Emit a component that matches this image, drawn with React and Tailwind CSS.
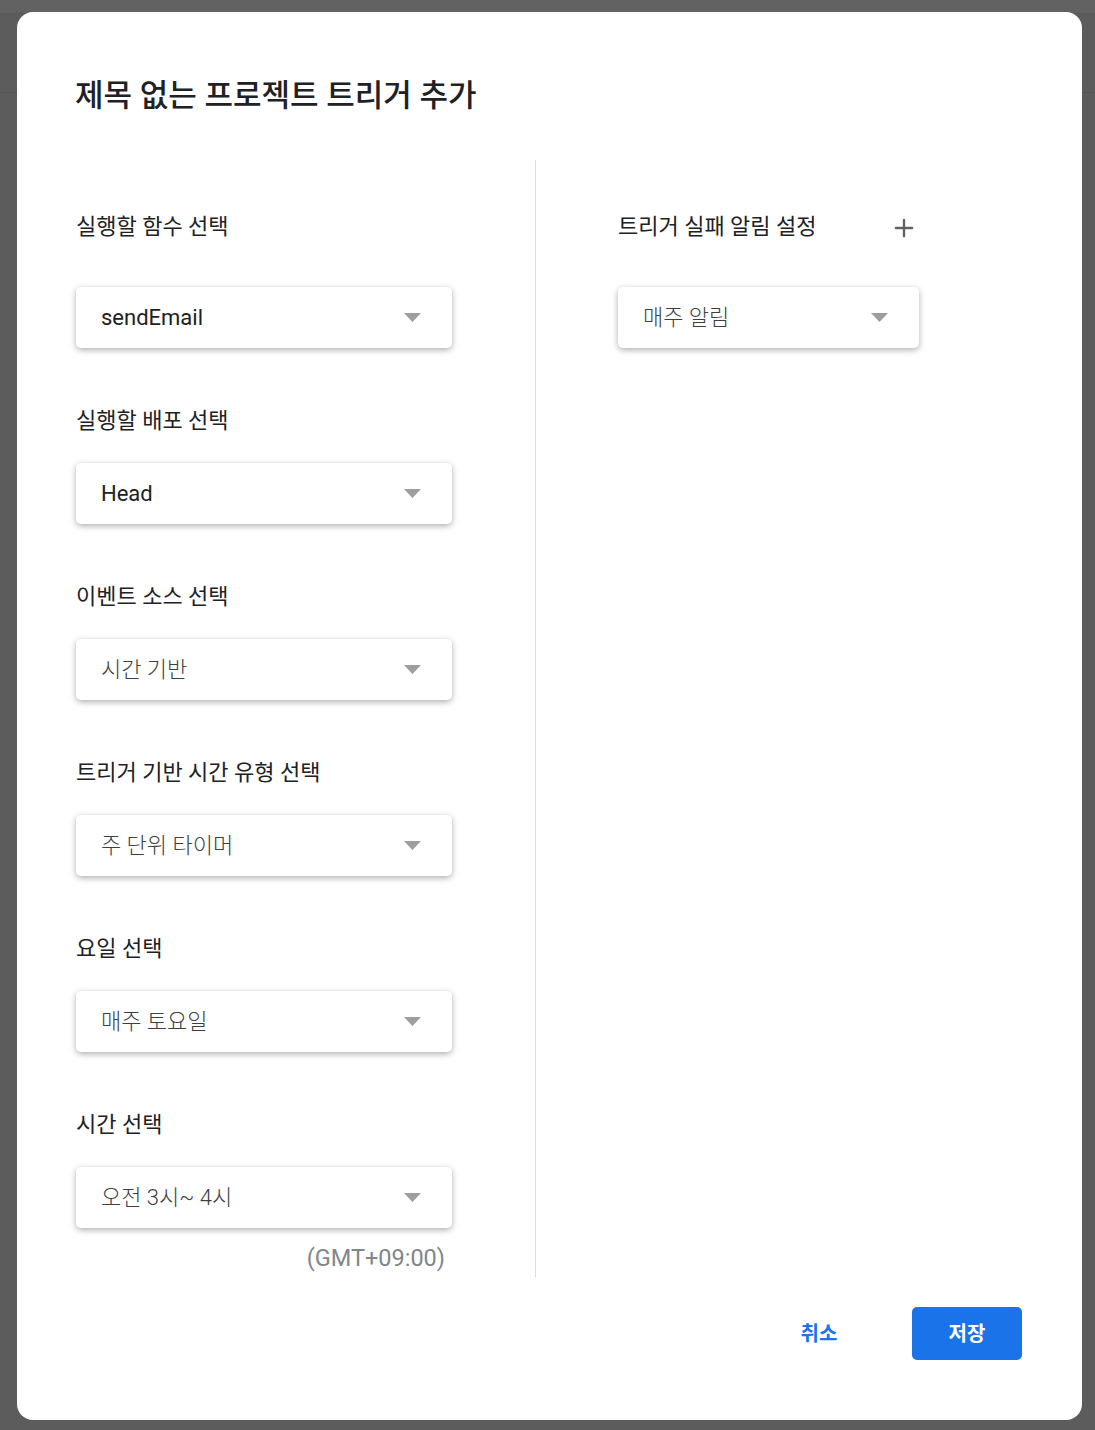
import React from "react";
import { FiPlus } from "react-icons/fi";

const FONT = { fontFamily: "Roboto, 'Noto Sans CJK KR', sans-serif" };

const LEFT_FIELDS = [
  { label: "실행할 함수 선택", value: "sendEmail", latin: true },
  { label: "실행할 배포 선택", value: "Head", latin: true },
  { label: "이벤트 소스 선택", value: "시간 기반" },
  { label: "트리거 기반 시간 유형 선택", value: "주 단위 타이머" },
  { label: "요일 선택", value: "매주 토요일" },
  { label: "시간 선택", value: "오전 3시~ 4시" },
];

const Caret = () => (
  <svg width="17" height="9" viewBox="0 0 17 9" aria-hidden="true">
    <path d="M0 0 L17 0 L8.5 9 Z" fill="#9e9e9e" />
  </svg>
);

const Dropdown = ({ value, latin, width = "w-[376px]" }) => (
  <div
    className={`${width} h-[61px] rounded-[5px] bg-white shadow-[0_2px_6px_rgba(0,0,0,0.32)] flex items-center justify-between pl-[25px] pr-[31px]`}
  >
    <span
      className={`text-[22px] leading-none ${
        latin ? "text-[#202124]" : "text-[#3c4043] font-light"
      }`}
    >
      {value}
    </span>
    <Caret />
  </div>
);

const Field = ({ field, first }) => (
  <div className={first ? "" : "mt-[58px]"}>
    <div
      className={`text-[22px] leading-[30px] text-[#202124] ${
        first ? "mb-[45px]" : "mb-[27px]"
      }`}
    >
      {field.label}
    </div>
    <Dropdown value={field.value} latin={field.latin} />
  </div>
);

export default function App() {
  return (
    <div className="relative w-[1095px] h-[1430px] bg-[#5c5c5c] overflow-hidden" style={FONT}>
      <div className="h-[14px] bg-[#626262] border-b border-[#575757]" />
      <div className="h-[79px] border-b border-[#545454]" />

      {/* dialog */}
      <div className="absolute left-[17px] top-[12px] w-[1065px] h-[1408px] bg-white rounded-[16px] flex flex-col">
        <h1 className="pl-[58px] pt-[64px] text-[31px] leading-[40px] font-medium text-[#202124]">
          제목 없는 프로젝트 트리거 추가
        </h1>

        <div className="mt-[44px] flex">
          <div className="w-[519px] pl-[59px] pt-[52px] pb-[4px] border-r border-[#dadce0]">
            {LEFT_FIELDS.map((f, i) => (
              <Field key={f.label} field={f} first={i === 0} />
            ))}
            <div className="w-[369px] mt-[15px] text-right text-[23.5px] leading-[30px] text-[#80868b]">
              (GMT+09:00)
            </div>
          </div>

          <div className="pl-[82px] pt-[52px]">
            <div className="w-[302px] flex items-center justify-between mb-[45px]">
              <span className="text-[22px] leading-[30px] text-[#202124]">
                트리거 실패 알림 설정
              </span>
              <FiPlus size={28} color="#5f6368" strokeWidth={2} className="mr-[2px] mt-[2px]" />
            </div>
            <Dropdown value="매주 알림" width="w-[301px]" />
          </div>
        </div>

        <div className="mt-[30px] pr-[60px] flex justify-end items-center gap-[38px]">
          <button className="w-[110px] h-[53px] text-[20px] font-bold text-[#1a73e8]">
            취소
          </button>
          <button className="w-[110px] h-[53px] rounded-[5px] bg-[#1a73e8] text-[20px] font-bold text-white">
            저장
          </button>
        </div>
      </div>
    </div>
  );
}
